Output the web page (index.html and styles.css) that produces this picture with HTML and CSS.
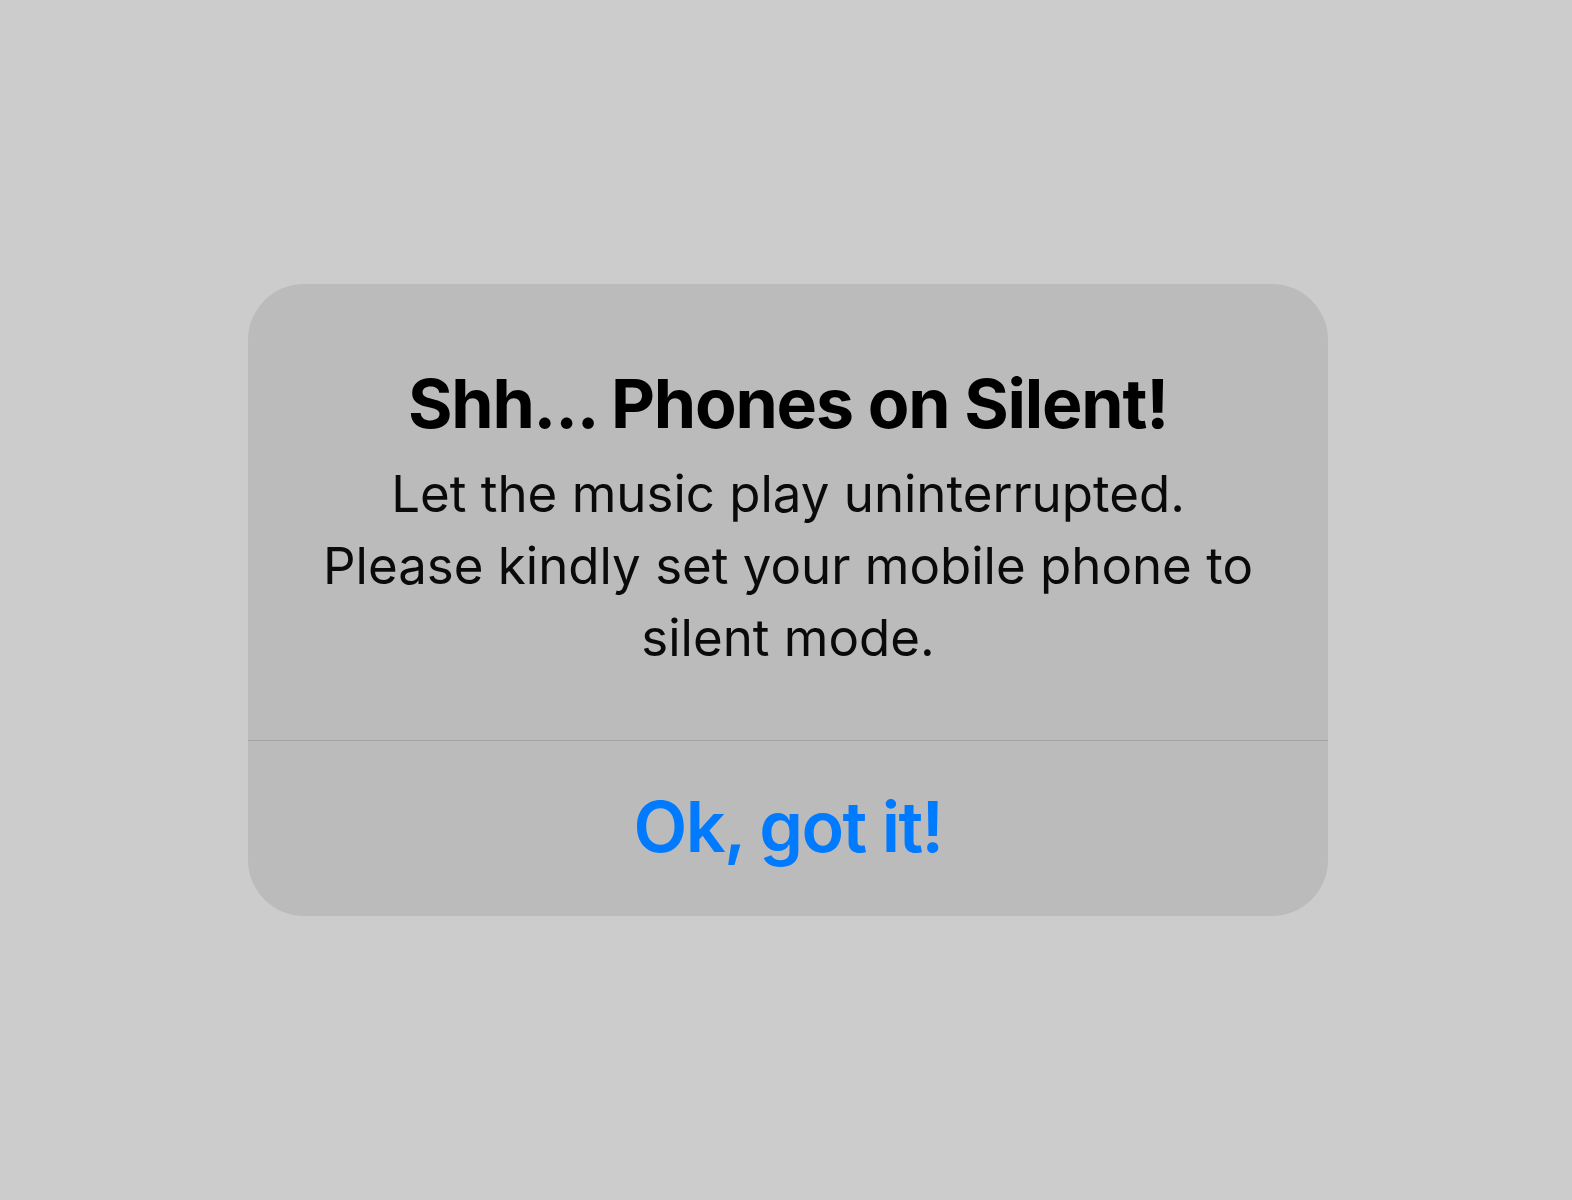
FILE: index.html
```html
<!doctype html>
<html>

<head>
  <title>Silent mode</title>
  <link rel="stylesheet" href="styles.css">
</head>

<body>
  <div class="alert" role="alertdialog">
    <div class="alert-body">
      <h1 class="alert-title">Shh... Phones on Silent!</h1>
      <p class="alert-text">Let the music play uninterrupted.<br>Please kindly set your mobile phone to silent mode.</p>
    </div>
    <button type="button" class="alert-action">Ok, got it!</button>
  </div>
</body>

</html>
```

FILE: styles.css
```css
html {
  font-family: Inter, "Noto Sans", sans-serif;
}

body {
  margin: 0;
  background: #cccccc;
  height: 100vh;
  display: flex;
  justify-content: center;
  padding: 284px 0 0 4px;
  box-sizing: border-box;
}

.alert {
  width: 1080px;
  height: 632px;
  background: #bbbbbb;
  border-radius: 56px;
  display: flex;
  flex-direction: column;
  overflow: hidden;
}

.alert-body {
  padding: 77px 60px 0 60px;
  height: 457px;
  box-sizing: border-box;
  border-bottom: 1px solid #a3a3a3;
  text-align: center;
}

.alert-title {
  margin: 0;
  font-size: 68px;
  font-weight: 650;
  line-height: 84px;
  color: #000;
  letter-spacing: -1.2px;
}

.alert-text {
  margin: 13px 0 0 0;
  font-size: 51px;
  font-weight: 400;
  line-height: 72px;
  color: #0a0a0a;
}

.alert-action {
  flex: 1;
  border: 0;
  background: none;
  font: inherit;
  font-size: 70px;
  font-weight: 600;
  line-height: 84px;
  letter-spacing: -1.6px;
  color: #007aff;
  padding: 0 0 4px 0;
  cursor: pointer;
}
```
